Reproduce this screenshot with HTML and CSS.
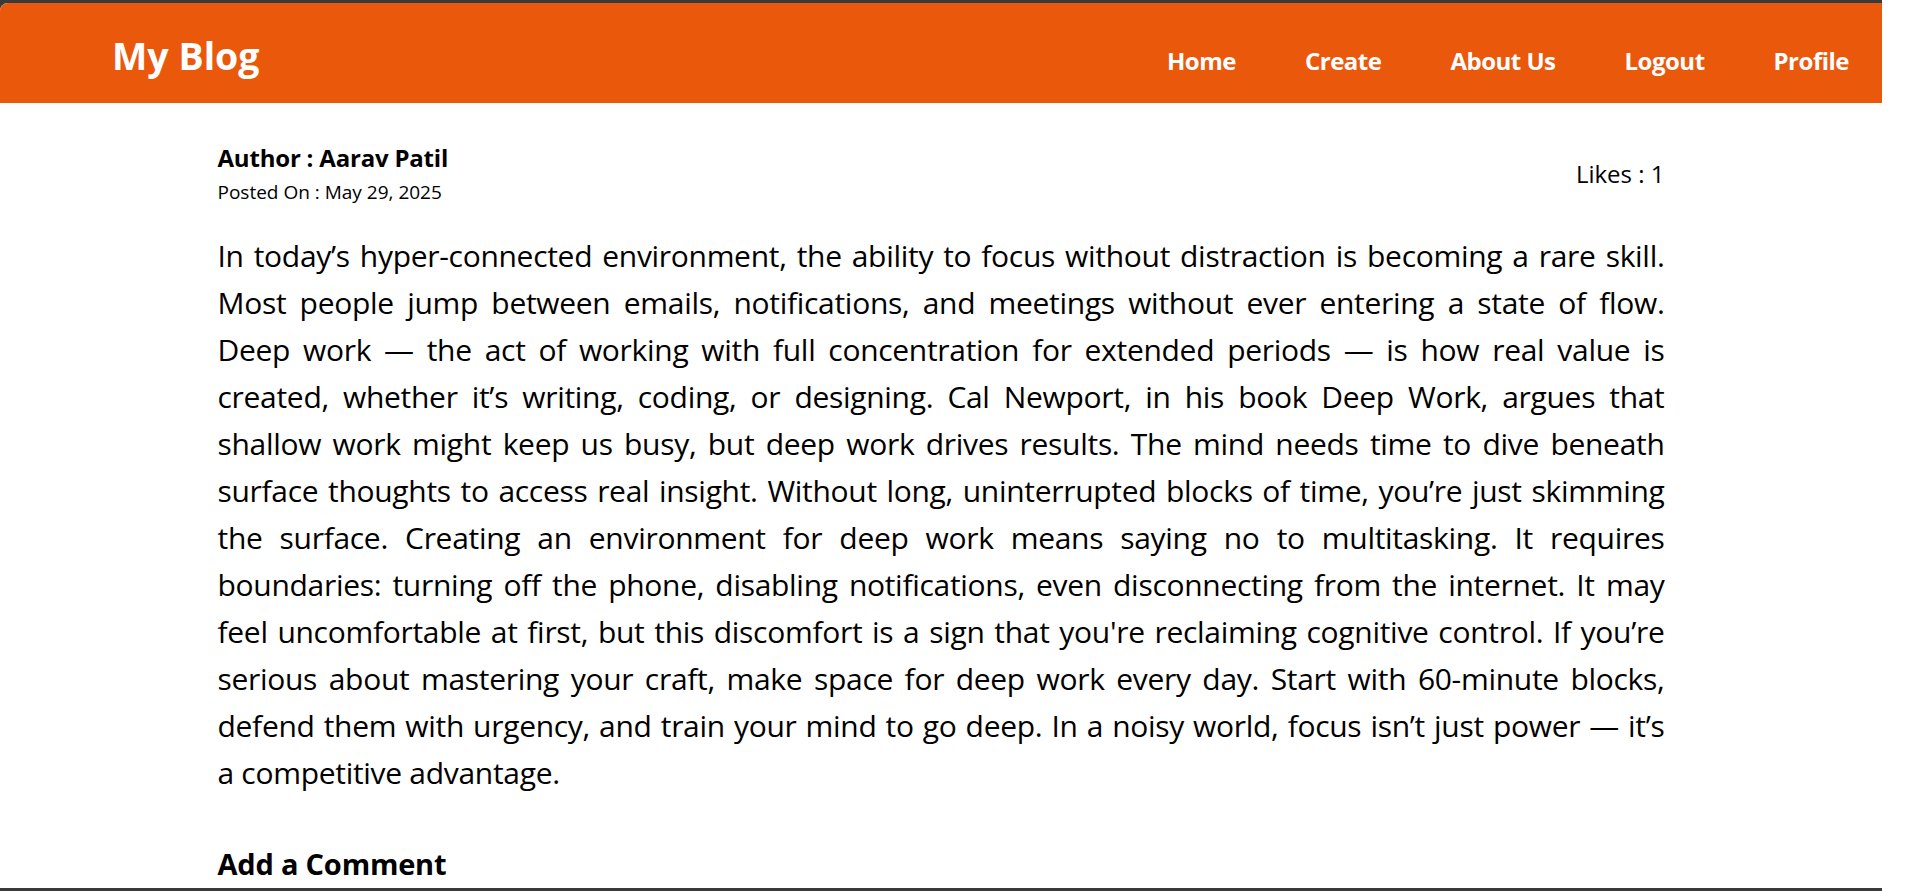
FILE: index.html
```html
<!DOCTYPE html>
<html lang="en">
<head>
<meta charset="utf-8">
<title>My Blog</title>
<link rel="stylesheet" href="styles.css">
</head>
<body>
<div class="frame">
  <div class="page">
    <header class="topbar">
      <div class="brand">My Blog</div>
      <nav class="nav">
        <a href="#">Home</a>
        <a href="#">Create</a>
        <a href="#">About Us</a>
        <a href="#">Logout</a>
        <a href="#">Profile</a>
      </nav>
    </header>
    <main class="post">
      <div class="meta">
        <div class="byline">
          <div class="author">Author : Aarav Patil</div>
          <div class="date">Posted On : May 29, 2025</div>
        </div>
        <div class="likes">Likes : 1</div>
      </div>
      <p class="content">
        <span class="ln">In today’s hyper-connected environment, the ability to focus without distraction is becoming a rare skill.</span>
        <span class="ln">Most people jump between emails, notifications, and meetings without ever entering a state of flow.</span>
        <span class="ln">Deep work — the act of working with full concentration for extended periods — is how real value is</span>
        <span class="ln">created, whether it’s writing, coding, or designing. Cal Newport, in his book Deep Work, argues that</span>
        <span class="ln">shallow work might keep us busy, but deep work drives results. The mind needs time to dive beneath</span>
        <span class="ln">surface thoughts to access real insight. Without long, uninterrupted blocks of time, you’re just skimming</span>
        <span class="ln">the surface. Creating an environment for deep work means saying no to multitasking. It requires</span>
        <span class="ln">boundaries: turning off the phone, disabling notifications, even disconnecting from the internet. It may</span>
        <span class="ln">feel uncomfortable at first, but this discomfort is a sign that you're reclaiming cognitive control. If you’re</span>
        <span class="ln">serious about mastering your craft, make space for deep work every day. Start with 60-minute blocks,</span>
        <span class="ln">defend them with urgency, and train your mind to go deep. In a noisy world, focus isn’t just power — it’s</span>
        <span class="ln last">a competitive advantage.</span>
      </p>
      <h2 class="comment-title">Add a Comment</h2>
    </main>
  </div>
</div>
</body>
</html>
```

FILE: styles.css
```css
html, body {
  margin: 0;
  padding: 0;
  background: #ffffff;
}
body {
  font-family: "Open Sans", "Noto Sans", sans-serif;
  color: #000000;
  width: 1907px;
  height: 891px;
  overflow: hidden;
}
.frame {
  width: 1882px;
  height: 891px;
  background: #3a3a3a;
  padding: 3px 0;
  box-sizing: border-box;
}
.page {
  height: 885px;
  background: #ffffff;
  border-top-left-radius: 8px;
  overflow: hidden;
}
.topbar {
  height: 100px;
  box-sizing: border-box;
  background: #ea580c;
  display: flex;
  align-items: baseline;
  justify-content: space-between;
  padding: 27px 33px 0 112px;
}
.brand {
  color: #ffffff;
  font-weight: 700;
  font-size: 37.5px;
  line-height: 51px;
}
.nav {
  display: flex;
  gap: 69px;
}
.nav a {
  color: #ffffff;
  text-decoration: none;
  font-weight: 700;
  font-size: 24px;
  letter-spacing: -0.5px;
  line-height: 34px;
}
.post {
  width: 1447px;
  margin: 0 auto;
  padding-top: 38px;
}
.meta {
  display: flex;
  justify-content: space-between;
  align-items: center;
}
.author {
  font-weight: 700;
  font-size: 24px;
  letter-spacing: -0.2px;
  line-height: 34px;
}
.date {
  margin-top: 4px;
  font-size: 19px;
  line-height: 27px;
}
.likes {
  font-size: 24px;
  line-height: 32px;
}
.content {
  margin: 26px 0 0 0;
  font-size: 30px;
  letter-spacing: -0.3px;
  line-height: 47px;
  text-align: justify;
}
.ln {
  display: block;
  text-align-last: justify;
}
.ln.last {
  text-align-last: left;
}
.comment-title {
  margin: 51px 0 0 0;
  font-size: 29px;
  letter-spacing: -0.2px;
  line-height: 34px;
  font-weight: 700;
}
```
